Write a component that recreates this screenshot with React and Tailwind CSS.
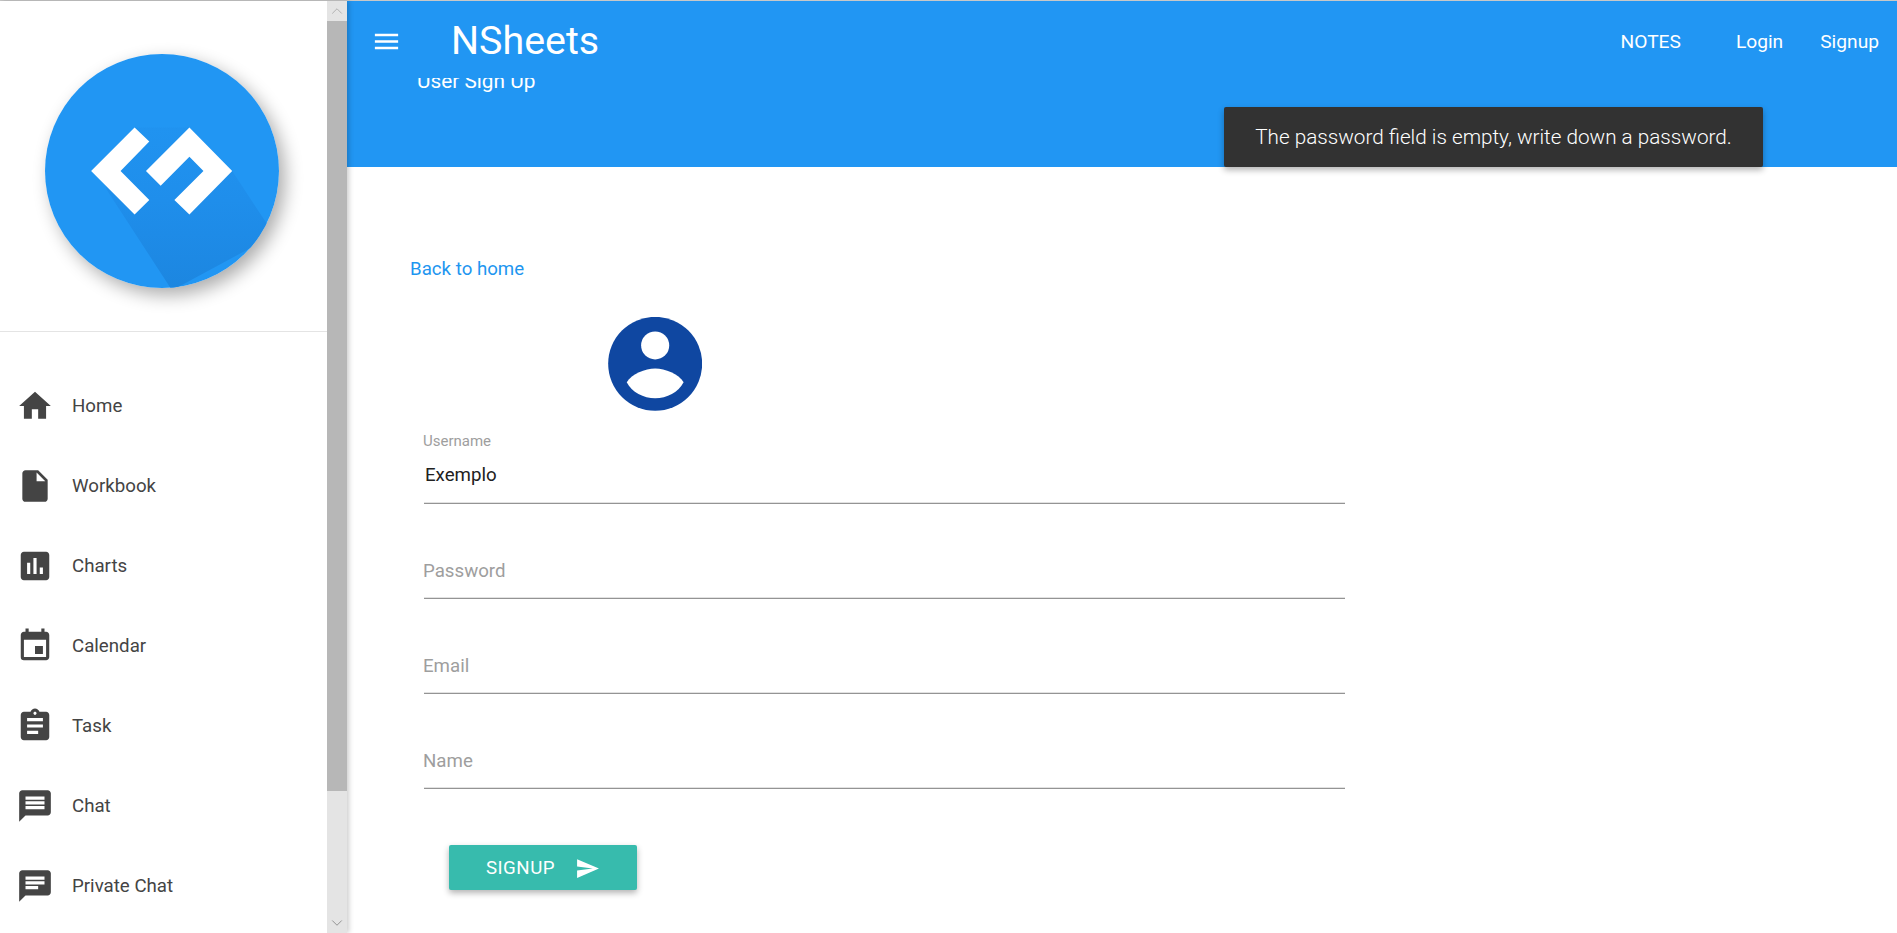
import React from 'react';
import { MdHome, MdInsertDriveFile, MdAssessment, MdEvent, MdAssignment, MdChat, MdMessage, MdMenu, MdSend } from 'react-icons/md';
import { ChevronUp, ChevronDown } from 'lucide-react';

const navItems = [
  { label: 'Home', icon: MdHome },
  { label: 'Workbook', icon: MdInsertDriveFile },
  { label: 'Charts', icon: MdAssessment },
  { label: 'Calendar', icon: MdEvent },
  { label: 'Task', icon: MdAssignment },
  { label: 'Chat', icon: MdMessage },
  { label: 'Private Chat', icon: MdChat },
];

function Logo() {
  return (
    <div className="w-[234px] h-[234px] rounded-full shadow-[6px_7px_18px_rgba(0,0,0,0.33)]">
      <svg width="234" height="234" viewBox="135 163 700 700">
        <defs>
          <clipPath id="logo-clip">
            <circle cx="485" cy="513" r="350" />
          </clipPath>
          <linearGradient id="logo-shade" x1="0" y1="0" x2="0" y2="1">
            <stop offset="0" stopColor="#2093F0" />
            <stop offset="0.45" stopColor="#1F8EEB" />
            <stop offset="1" stopColor="#1C86E0" />
          </linearGradient>
        </defs>
        <circle cx="485" cy="513" r="350" fill="#2196F3" />
        <polygon clipPath="url(#logo-clip)" points="320,570 515,870 830,700 795,665 695,513 567,383 403,383 300,500" fill="url(#logo-shade)" />
        <polygon points="403,383 447,425 361,513 447,600 403,643 273,513" fill="#fff" />
        <polygon points="567,383 695,513 567,643 522,600 609,513 567,470 481,557 437,513" fill="#fff" />
      </svg>
    </div>
  );
}

function Avatar() {
  return (
    <svg width="94" height="94" viewBox="624 50 281 281">
      <circle cx="765" cy="190" r="140.5" fill="#0F47A1" />
      <circle cx="765" cy="135" r="42" fill="#fff" />
      <path d="M680 245 C 695 220 735 204 765 204 C 795 204 835 220 850 245 C 835 275 800 293 765 293 C 730 293 695 275 680 245 Z" fill="#fff" />
    </svg>
  );
}

function Field({ label, value }) {
  return (
    <div className="h-[95px] flex flex-col justify-end">
      <div className="relative h-[62px] border-b border-[#949494] shadow-[inset_0_-1px_0_#e2e2e2]">
        {value ? (
          <>
            <span className="absolute -left-[1px] -top-[9px] text-[15px] leading-[16px] text-[#9e9e9e]">{label}</span>
            <span className="absolute left-[1px] top-[21px] text-[18.7px] leading-[24px] text-[#212121]">{value}</span>
          </>
        ) : (
          <span className="absolute -left-[1px] top-[22px] text-[18.7px] leading-[24px] text-[#9e9e9e]">{label}</span>
        )}
      </div>
    </div>
  );
}

export default function App() {
  return (
    <div className="h-[933px] w-full overflow-hidden flex flex-col bg-white font-['Roboto',sans-serif]">
      <div className="h-px bg-[#c8c8c8] shrink-0"></div>
      <div className="flex flex-1 min-h-0">
        {/* Sidebar */}
        <aside className="w-[347px] shrink-0 flex relative z-20 shadow-[2px_0_5px_rgba(0,0,0,0.2)]">
          <div className="w-[327px] flex flex-col">
            <div className="h-[331px] flex pl-[45px] pt-[53px] border-b border-[#e4e4e4] shrink-0">
              <Logo />
            </div>
            <nav className="pt-[34px]">
              {navItems.map((item) => {
                const Icon = item.icon;
                return (
                  <div key={item.label} className="h-[80px] flex items-center pl-[16px] text-[#444]">
                    <Icon size={38} className="shrink-0" />
                    <span className="ml-[18px] text-[18.7px]">{item.label}</span>
                  </div>
                );
              })}
            </nav>
          </div>
          {/* Scrollbar */}
          <div className="w-[20px] flex flex-col bg-[#e4e4e4]">
            <div className="h-[20px] flex items-center justify-center text-[#a0a0a0]">
              <ChevronUp size={18} strokeWidth={1} />
            </div>
            <div className="h-[770px] bg-[#b7b7b7]"></div>
            <div className="flex-1 flex items-end justify-center pb-[1px] text-[#777]">
              <ChevronDown size={18} strokeWidth={1} />
            </div>
          </div>
        </aside>

        {/* Main */}
        <main className="flex-1 min-w-0 relative">
          <header className="h-[166px] bg-[#2196F3] text-white overflow-hidden">
            <div className="h-[77px] relative z-10 bg-[#2196F3] flex items-center pl-[24px] pr-[18px] pt-[3px]">
              <MdMenu size={31} />
              <span className="ml-[49px] text-[39.4px] leading-none">NSheets</span>
              <div className="ml-auto flex items-center text-[19.2px] mt-[2px]">
                <span>NOTES</span>
                <span className="ml-[55px]">Login</span>
                <span className="ml-[37px]">Signup</span>
              </div>
            </div>
            <div className="-mt-[11px] pl-[70px] text-[20.8px] leading-[28px]">User Sign Up</div>
          </header>

          {/* Toast */}
          <div className="absolute z-30 left-[877px] top-[106px] w-[539px] h-[60px] pt-[2px] flex items-center justify-center rounded-[2px] bg-[#323232] text-white text-[20.7px] font-light shadow-[0_3px_6px_rgba(0,0,0,0.3)]">
            The password field is empty, write down a password.
          </div>

          <div className="pl-[63px] pt-[89px]">
            <a className="text-[18.7px] leading-[26px] text-[#1E96F0]">Back to home</a>
            <div className="pl-[198px] pt-[35px]">
              <Avatar />
            </div>
            <form className="ml-[14px] w-[921px] -mt-[2px]">
              <Field label="Username" value="Exemplo" />
              <Field label="Password" />
              <Field label="Email" />
              <Field label="Name" />
              <button type="button" className="mt-[56px] ml-[25px] w-[188px] h-[45px] flex items-center justify-center gap-[20px] rounded-[2px] bg-[#37BBAD] text-white text-[18.7px] tracking-[0.5px] pt-[1px] shadow-[0_3px_6px_rgba(0,0,0,0.3)]">
                SIGNUP
                <MdSend size={25} />
              </button>
            </form>
          </div>
        </main>
      </div>
    </div>
  );
}
